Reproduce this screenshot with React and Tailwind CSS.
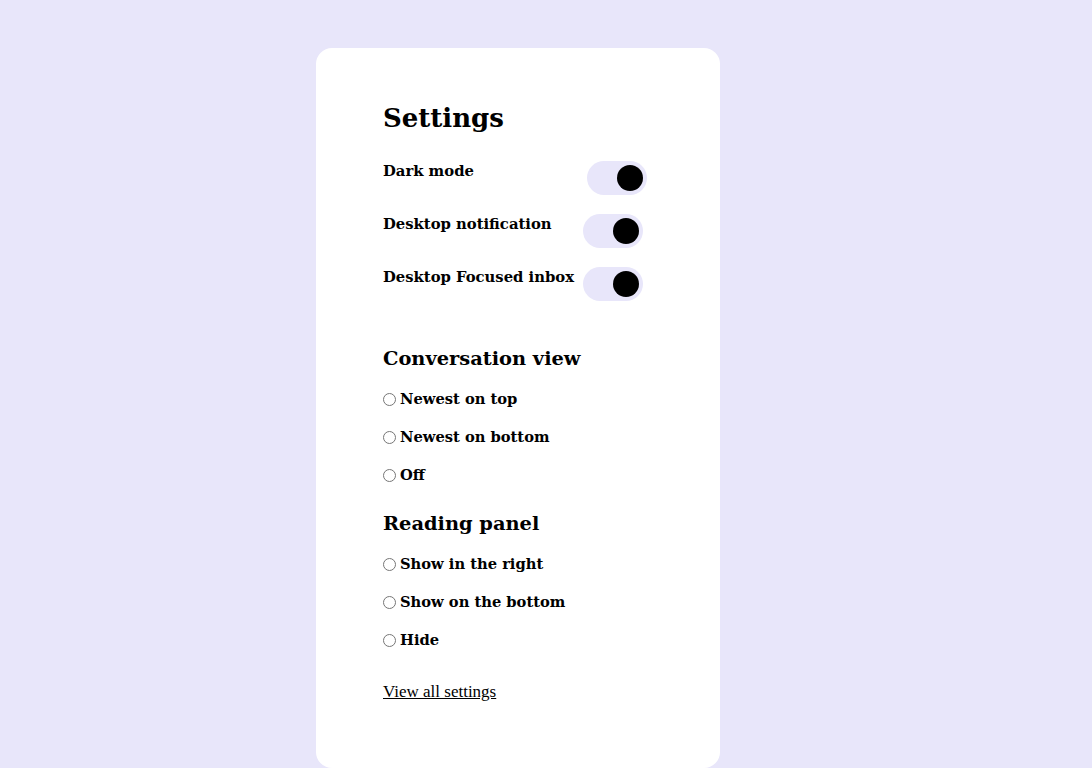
export default function App() {
  const toggles = [
    { label: "Dark mode", w: "w-[204px]" },
    { label: "Desktop notification", w: "w-[200px]" },
    { label: "Desktop Focused inbox", w: "w-[200px]" },
  ];
  const conversation = ["Newest on top", "Newest on bottom", "Off"];
  const reading = ["Show in the right", "Show on the bottom", "Hide"];

  return (
    <div className="min-h-screen bg-[#e8e6fa] pt-12 pl-[316px] font-['DejaVu_Serif',serif] text-black">
      <div className="w-[404px] h-[720px] bg-white rounded-2xl pl-[67px] pt-[52px]">
        <h1 className="text-[26px] font-bold leading-9">Settings</h1>

        {/* toggles */}
        <div className="mt-[25px] flex flex-col gap-[19px]">
          {toggles.map((t) => (
            <div key={t.label} className="flex items-start">
              <span className={`${t.w} text-[14.8px] font-bold -mt-[1px]`}>{t.label}</span>
              <div className="w-[60px] h-[34px] rounded-full bg-[#e8e6fa] flex items-center justify-end pr-[4px]">
                <div className="w-[26px] h-[26px] rounded-full bg-black" />
              </div>
            </div>
          ))}
        </div>

        <h2 className="mt-[42px] text-[19.4px] leading-[32px] font-bold">Conversation view</h2>
        <div className="mt-[14px] flex flex-col gap-[18px]">
          {conversation.map((c) => (
            <label key={c} className="flex items-center text-[14.7px] font-bold leading-5">
              <input type="radio" name="conv" className="w-[13px] h-[13px] m-0 mr-[4px]" />
              {c}
            </label>
          ))}
        </div>

        <h2 className="mt-[23px] text-[19.4px] leading-[32px] font-bold">Reading panel</h2>
        <div className="mt-[14px] flex flex-col gap-[18px]">
          {reading.map((c) => (
            <label key={c} className="flex items-center text-[14.7px] font-bold leading-5">
              <input type="radio" name="read" className="w-[13px] h-[13px] m-0 mr-[4px]" />
              {c}
            </label>
          ))}
        </div>

        <a href="#" className="mt-[29px] inline-block font-['Liberation_Serif',serif] text-[17px] underline">
          View all settings
        </a>
      </div>
    </div>
  );
}
